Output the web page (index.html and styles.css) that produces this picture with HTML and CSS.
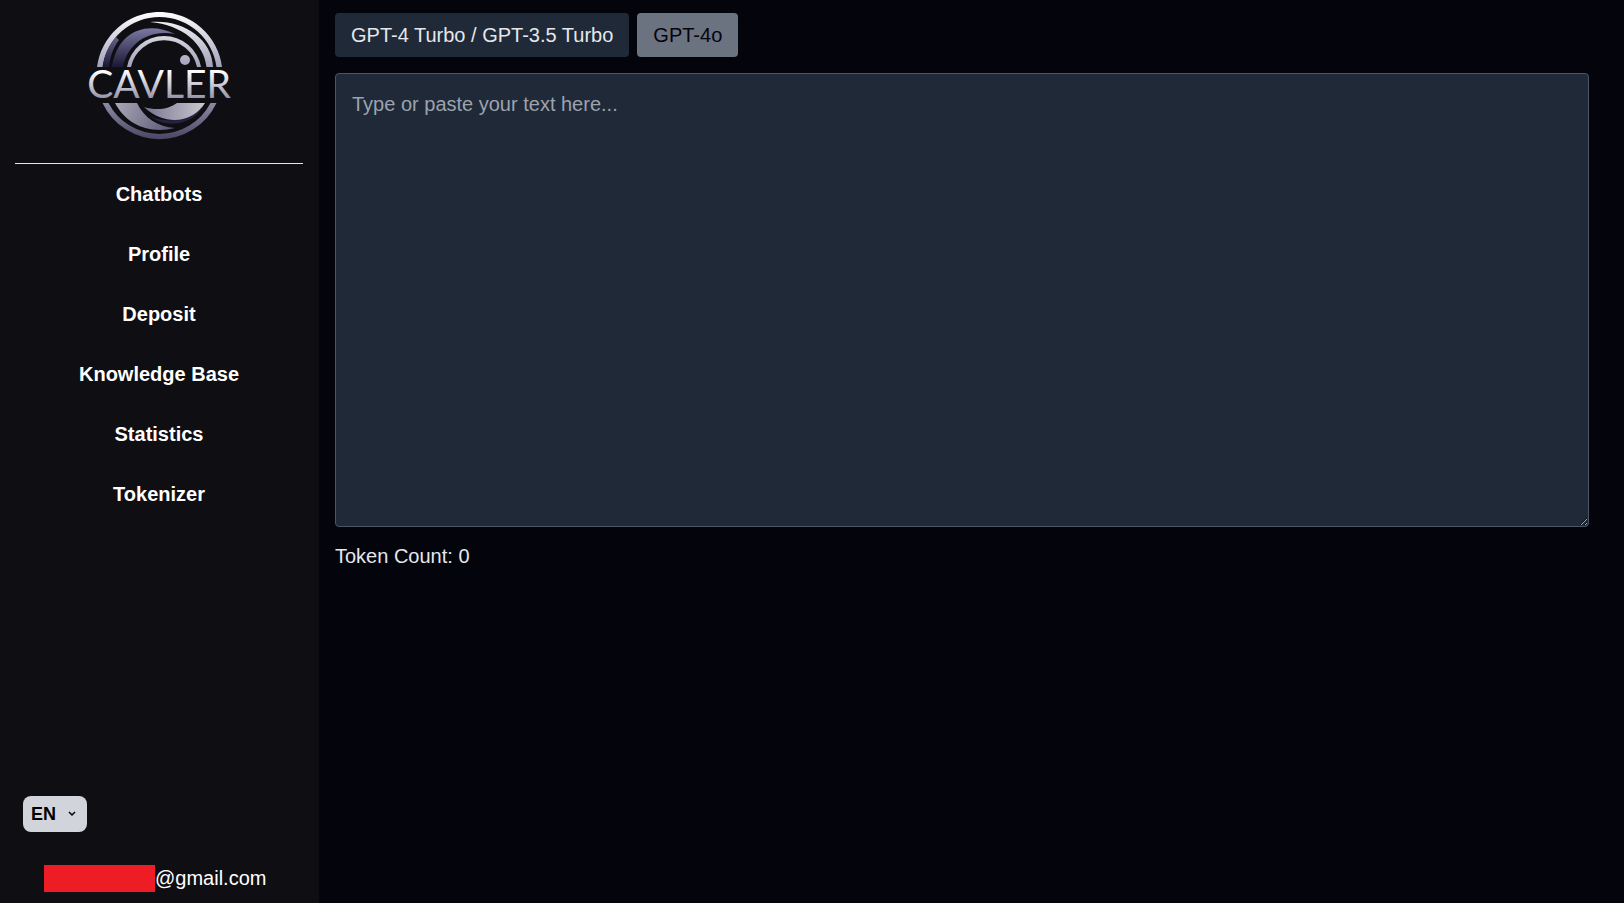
FILE: index.html
```html
<!DOCTYPE html>
<html lang="en">
<head>
	<meta charset="utf-8">
	<title>Cavler - Tokenizer</title>
	<link rel="stylesheet" href="styles.css">
</head>

<body>

<div class="app">
	<aside class="sidebar">
		<a class="logo" href="#">
			<svg viewBox="0 0 150 128" role="img" aria-label="Cavler">
				<defs>
					<linearGradient id="silver" x1="0" y1="0" x2="0" y2="56" gradientUnits="userSpaceOnUse">
						<stop offset="0" stop-color="#ffffff"/>
						<stop offset="1" stop-color="#a09fb8"/>
					</linearGradient>
					<linearGradient id="violet" x1="0" y1="16" x2="0" y2="54" gradientUnits="userSpaceOnUse">
						<stop offset="0" stop-color="#7c79a3"/>
						<stop offset="1" stop-color="#1d1a38"/>
					</linearGradient>
					<linearGradient id="letters" x1="0" y1="59" x2="0" y2="86" gradientUnits="userSpaceOnUse">
						<stop offset="0" stop-color="#ffffff"/>
						<stop offset="1" stop-color="#9594ab"/>
					</linearGradient>
					<linearGradient id="base" x1="0" y1="90" x2="0" y2="126" gradientUnits="userSpaceOnUse">
						<stop offset="0" stop-color="#8f8da6"/>
						<stop offset="1" stop-color="#4c4966"/>
					</linearGradient>
					<linearGradient id="waveLeft" x1="31" y1="90" x2="88" y2="116" gradientUnits="userSpaceOnUse">
						<stop offset="0" stop-color="#aaa8b8"/>
						<stop offset="1" stop-color="#5b5876"/>
					</linearGradient>
					<linearGradient id="waveRight" x1="60" y1="0" x2="121" y2="0" gradientUnits="userSpaceOnUse">
						<stop offset="0" stop-color="#77748f"/>
						<stop offset="1" stop-color="#c9c8cf"/>
					</linearGradient>
				</defs>
				<!-- rings over the name -->
				<path fill="url(#silver)" d="M13 55A63 63 0 0 1 138 55H132.500A57.500 57.500 0 0 0 18.500 55Z"/>
				<path fill="url(#silver)" d="M66 10C98 7 128 26 129 55H122.500C120 32 99 13 66 10Z"/>
				<path fill="url(#violet)" d="M19 55C20 43 25 33 32 25L35 28C29 36 26 45 25 55Z"/>
				<path fill="url(#violet)" d="M28 55C33 20 62 8 91 22C62 17 43 34 39 55Z"/>
				<path fill="url(#silver)" d="M43 55A37.600 37.600 0 0 1 117 55H113A33.700 33.700 0 0 0 47 55Z"/>
				<circle fill="url(#silver)" cx="101" cy="48" r="5"/>
				<text class="logo-name" x="75" y="86" text-anchor="middle" fill="url(#letters)">CAVLER</text>
				<!-- waves under the name -->
				<path fill="url(#base)" d="M18.500 91A63 63 0 0 0 132.500 91H126.500A57.500 57.500 0 0 1 24.500 91Z"/>
				<path fill="url(#waveLeft)" d="M31 91H53C60 106 74 115 91 116C67 122 43 114 31 91Z"/>
				<path fill="#25213f" d="M66 104C80 116 107 115 120 94C108 109 82 112 66 104Z"/>
				<path fill="url(#waveRight)" d="M60 95C73 99 85 97 93 91H121C111 108 84 117 60 95Z"/>
			</svg>
		</a>
		<nav class="menu">
			<a href="#">Chatbots</a>
			<a href="#">Profile</a>
			<a href="#">Deposit</a>
			<a href="#">Knowledge Base</a>
			<a href="#">Statistics</a>
			<a href="#">Tokenizer</a>
		</nav>
		<div class="lang">
			<select class="lang-select" aria-label="Language">
				<option>EN</option>
			</select>
			<svg class="lang-arrow" viewBox="0 0 8 6" aria-hidden="true"><path d="M1 1l3 3 3-3"/></svg>
		</div>
		<div class="account"><span class="redacted"></span>@gmail.com</div>
	</aside>

	<main class="content">
		<div class="models">
			<button type="button" class="model">GPT-4 Turbo / GPT-3.5 Turbo</button>
			<button type="button" class="model selected">GPT-4o</button>
		</div>
		<textarea class="source" aria-label="Text" placeholder="Type or paste your text here..."></textarea>
		<p class="count">Token Count: <span id="count">0</span></p>
	</main>
</div>

</body>
</html>
```

FILE: styles.css
```css
*{
	box-sizing:border-box;
}
body{
	margin:0;
	background-color:#04040d;
	color:#e5e7eb;
	font-family:"Liberation Sans",Arial,sans-serif;
	font-size:20px;
	line-height:28px;
}
button,select,textarea{
	font:inherit;
}
.app{
	display:flex;
	min-height:100vh;
}

/* sidebar */
.sidebar{
	display:flex;
	flex-direction:column;
	flex:0 0 319px;
	padding:12px 16px 11px 15px;
	background-color:#0f0e13;
	color:#fff;
}
.logo{
	display:flex;
	justify-content:center;
	padding-bottom:23px;
	border-bottom:1px solid #e5e7eb;
}
.logo svg{
	width:150px;
	height:128px;
}
.logo-name{
	font-family:Lato,sans-serif;
	font-size:39px;
}
.menu{
	display:flex;
	flex-direction:column;
}
.menu a{
	padding:16px;
	color:#fff;
	font-weight:bold;
	text-align:center;
	text-decoration:none;
}
.lang{
	position:relative;
	align-self:flex-start;
	margin:auto 8px 32px;
}
.lang-select{
	display:block;
	width:64px;
	height:36px;
	padding:0 8px;
	border:0;
	border-radius:8px;
	background-color:#d1d5db;
	color:#000;
	font-size:18px;
	font-weight:bold;
	appearance:none;
}
.lang-arrow{
	position:absolute;
	top:15px;
	right:11px;
	width:8px;
	height:6px;
	fill:none;
	stroke:#000;
	stroke-width:1.5;
	pointer-events:none;
}
.account{
	display:flex;
	align-items:center;
	padding-left:29px;
}
.redacted{
	width:111px;
	height:27px;
	background-color:#ee1c24;
}

/* tokenizer */
.content{
	flex:1;
	padding:13px 35px 16px 16px;
}
.models{
	display:flex;
	gap:8px;
	margin-bottom:16px;
}
.model{
	padding:8px 16px;
	border:0;
	border-radius:4px;
	background-color:#1f2937;
	color:#e5e7eb;
	cursor:pointer;
}
.model.selected{
	background-color:#6b7280;
	color:#04040d;
}
.source{
	display:block;
	width:100%;
	height:454px;
	padding:16px;
	border:1px solid #4b5563;
	border-radius:4px;
	background-color:#1f2937;
	color:#e5e7eb;
}
.source::placeholder{
	color:#9ca3af;
}
.count{
	margin:15px 0 0;
}
```
